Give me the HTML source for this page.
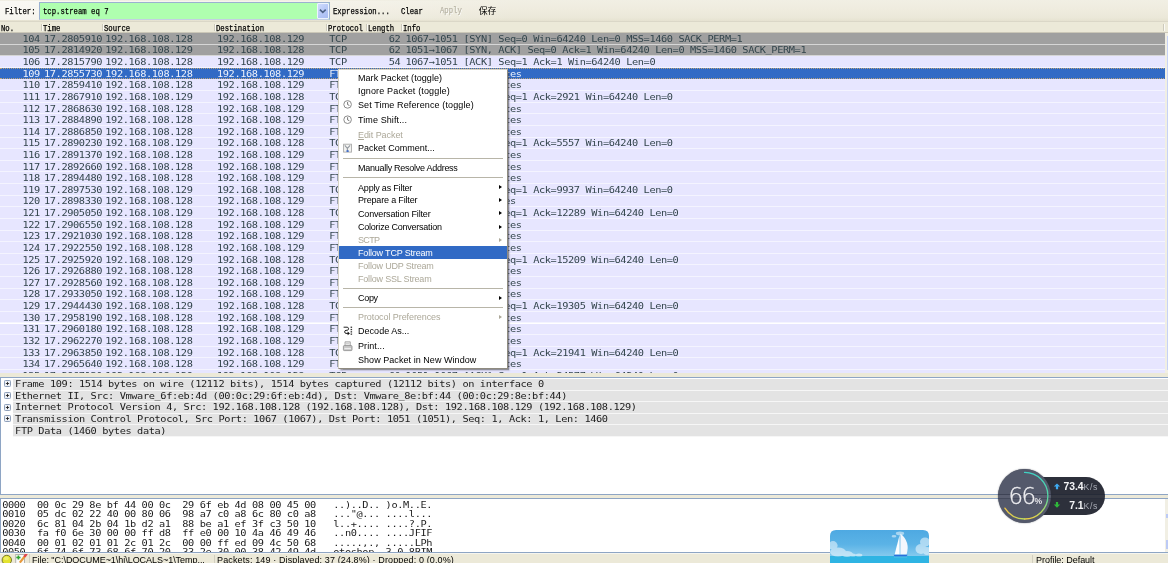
<!DOCTYPE html>
<html lang="zh"><head><meta charset="utf-8"><title>Wireshark</title>
<style>
html,body{margin:0;padding:0}
body{width:1169px;height:563px;overflow:hidden;background:#fff;position:relative;font-family:"Liberation Sans",sans-serif}
.abs{position:absolute}
#tb,#hd,#plist,#det,#hex,#sb,#menu{will-change:transform}
/* toolbar */
#tb{position:absolute;left:0;top:0;width:1168px;height:22px;background:linear-gradient(#f1efe4 0,#efecdf 40%,#ebe8d9 80%,#e7e3d2 93%,#d7d3c3 97%,#e6e3d4 100%)}
#tb:before{content:"";position:absolute;left:0;top:1px;width:520px;height:19px;background:linear-gradient(90deg,rgba(255,255,255,.6),rgba(255,255,255,.35) 50%,rgba(255,255,255,0))}
.ss{position:absolute;top:6.5px;font:8.7px "Liberation Mono","Noto Sans CJK SC",monospace;line-height:11px;color:#000;-webkit-text-stroke:.25px currentColor;transform:scaleX(.839);transform-origin:0 0;white-space:pre}
#finp{position:absolute;left:38.5px;top:2px;width:291.5px;height:18px;background:#afffaf;border:1px solid #9bb1d0;border-bottom-color:#c3d0e2;box-sizing:border-box}
#fdd{position:absolute;left:317px;top:3px;width:12px;height:16.4px;box-sizing:border-box;border:1px solid #eef3ff;border-radius:1px;background:linear-gradient(135deg,#cfdbfd,#b4c6f6 60%,#a9bdf2)}
/* header */
#hd{position:absolute;left:0;top:22px;width:1168px;height:11px;background:#ece9d8;border-bottom:1px solid #cbc7b8;box-sizing:border-box}
#hd .ss{top:1.5px}
#hd i{position:absolute;top:2px;width:1px;height:7px;background:#cdcabb;box-shadow:1px 0 0 #fbfaf5}
/* packet list */
#plist{position:absolute;left:0;top:33px;width:1165px;height:340px;overflow:hidden;background:#fff}
#vline{position:absolute;left:1165px;top:33px;width:3px;height:340px;background:#f1efe4}
#vline:after{content:"";position:absolute;left:2px;top:3px;width:1px;height:334px;background:#c6d2f7}
.r{position:absolute;left:0;width:1166px;height:11.62px;font:10.3px "DejaVu Sans Mono","Liberation Mono",monospace;letter-spacing:-.39px;line-height:11.6px;color:#33454c;white-space:pre;box-sizing:border-box;border-bottom:1px solid #f4f4ff;background:#e7e6ff;margin-top:-33px}
.r.g{background:#a0a0a0;border-bottom-color:#d6d6d6}
.r.s{background:#316ac5;color:#eef2fb;border-top:1px dotted #b9a27a;border-bottom:1px dotted #b9a27a}
.r.s span{top:-1.2px}
.r span{position:absolute;top:-.2px;transform:scaleY(.86);transform-origin:0 78%}
.no{right:1126.2px}.tm{left:44px}.sr{left:105.3px}.ds{left:217px}.pr{left:329.3px}.ln{right:765.7px}.in{left:405.4px}
/* splitters & panes */
#sp1{position:absolute;left:0;top:373px;width:1168px;height:4px;background:#ece9d8}
#det{position:absolute;left:0;top:377px;width:1168px;height:118px;box-sizing:border-box;border:1px solid #8ea5c4;border-right:0;background:#fff;overflow:hidden}
.d{position:absolute;left:12px;width:1156px;height:11.6px;box-sizing:border-box;border-bottom:1px solid #f6f6f6;background:#e3e3e3;font:10.3px "DejaVu Sans Mono","Liberation Mono",monospace;letter-spacing:-.39px;line-height:11.6px;color:#1c1c1c;white-space:pre}
.d span{position:absolute;left:2.1px;top:-.9px;transform:scaleY(.86);transform-origin:0 78%}
.ex{position:absolute;left:3.2px}
#sp2{position:absolute;left:0;top:495px;width:1168px;height:4px;background:#ece9d8}
#hex{position:absolute;left:0;top:498px;width:1168px;height:55px;border-right:0;box-sizing:border-box;border:1px solid #8ea5c4;background:#fff;overflow:hidden}
.h{position:absolute;left:1.2px;font:10.3px "DejaVu Sans Mono","Liberation Mono",monospace;letter-spacing:-.39px;line-height:11.6px;color:#1c1c1c;white-space:pre;transform:scaleY(.86);transform-origin:0 78%}
#sb{position:absolute;left:0;top:553px;width:1168px;height:10px;background:#ece9d8;font:9px "Liberation Sans",sans-serif;line-height:11px;color:#000;white-space:pre;overflow:hidden;border-top:1px solid #f6f5ee;box-sizing:border-box}
#sb span{position:absolute;top:1.3px}
/* menu */
#menu{position:absolute;left:338px;top:69px;width:170px;height:300px;background:#fff;border:1px solid #d6d3c6;border-right-color:#8f8b80;border-bottom-color:#8f8b80;box-sizing:border-box;box-shadow:1.7px 1.7px 1.5px rgba(60,60,70,.55);font:9px "Liberation Sans",sans-serif;color:#000;white-space:pre}
.mi.w{color:#fff}
.mi{position:absolute;left:19px;line-height:12px}
.mi.x{color:#aca899}
.ms{position:absolute;left:4px;width:160px;height:1px;background:#b8b5a8}
.ar{position:absolute;left:160px;width:0;height:0;border:2.5px solid transparent;border-left:3px solid #000;border-right:0}
.ar.x{border-left-color:#aca899}
#hl{position:absolute;left:0;top:176px;width:168px;height:13px;background:#316ac5}
/* widget */
#wg{position:absolute;left:997px;top:468px;width:110px;height:56px;white-space:pre;will-change:transform}
#pill{position:absolute;left:40px;top:9px;width:68.2px;height:38px;border-radius:0 19px 19px 0;background:#2d303b}
#circ{position:absolute;left:.6px;top:.6px;width:53px;height:54.2px;border-radius:50%;background:#54596b;box-shadow:0 0 1.2px rgba(40,44,56,.9)}
#w66{position:absolute;left:11.4px;top:14.6px;font:200 23px "DejaVu Sans","Liberation Sans",sans-serif;line-height:27px;color:#ececef;transform:scaleX(1);transform-origin:0 0;-webkit-text-stroke:.3px #ececef;letter-spacing:-1.4px}
#wpc{position:absolute;left:37.6px;top:27.6px;font:bold 8.6px "Liberation Sans",sans-serif;line-height:10px;color:#e4e4e8}
.wn{position:absolute;font:bold 10.4px "Liberation Sans",sans-serif;line-height:11px;color:#f4f4f6;letter-spacing:-.1px}
.wk{position:absolute;left:86.6px;font:8.8px "Liberation Sans",sans-serif;line-height:10px;color:#a9acb6;letter-spacing:.55px}
#hsb{position:absolute;left:1164.5px;top:499px;width:3.5px;height:53px;background:#f1efe4}
#hsb:before{content:"";position:absolute;left:1.5px;top:15px;width:2px;height:4px;background:#bccaf5}
#hsb:after{content:"";position:absolute;left:1.5px;top:41px;width:2px;height:9px;background:#bccaf5}
.cjk{position:absolute;top:6.4px;font:8.8px "Liberation Sans","Noto Sans CJK SC",sans-serif;line-height:11px;color:#000;white-space:pre}
#wln{position:absolute;left:1px;top:26px;width:107px;height:4.6px;box-sizing:border-box;background:rgba(255,255,255,.035);border-top:1px solid rgba(18,24,44,.38);border-bottom:1px solid rgba(18,24,44,.3)}

</style></head>
<body>
<div id="tb">
<span class="ss" style="left:5px">Filter:</span>
<div id="finp"></div><span class="ss" style="left:43px">tcp.stream eq 7</span>
<div id="fdd"><svg width="10" height="14" viewBox="0 0 10 14" style="position:absolute;left:0;top:0"><path d="M1.9 5.600L4.800 8.4L7.700 5.600" fill="none" stroke="#4d6185" stroke-width="1.5"/></svg></div>
<span class="ss" style="left:333px">Expression...</span>
<span class="ss" style="left:401px">Clear</span>
<span class="ss" style="left:439.5px;top:6px;color:#b9b5a6;text-shadow:.6px .6px 0 #fff">Apply</span>
<span class="cjk" style="left:478.8px">保存</span>
</div>
<div id="hd">
<span class="ss" style="left:1px">No.</span><i style="left:41px"></i>
<span class="ss" style="left:43px">Time</span><i style="left:102px"></i>
<span class="ss" style="left:104px">Source</span><i style="left:214px"></i>
<span class="ss" style="left:216px">Destination</span><i style="left:326px"></i>
<span class="ss" style="left:328px">Protocol</span><i style="left:366px"></i>
<span class="ss" style="left:368px">Length</span><i style="left:401px"></i>
<span class="ss" style="left:403px">Info</span><i style="left:1163px"></i>
</div>
<div id="vline"></div>
<div id="plist">
<div class="r g" style="top:33.00px"><span class="no">104</span><span class="tm">17.2805910</span><span class="sr">192.168.108.128</span><span class="ds">192.168.108.129</span><span class="pr">TCP</span><span class="ln">62</span><span class="in">1067→1051 [SYN] Seq=0 Win=64240 Len=0 MSS=1460 SACK_PERM=1</span></div>
<div class="r g" style="top:44.62px"><span class="no">105</span><span class="tm">17.2814920</span><span class="sr">192.168.108.129</span><span class="ds">192.168.108.128</span><span class="pr">TCP</span><span class="ln">62</span><span class="in">1051→1067 [SYN, ACK] Seq=0 Ack=1 Win=64240 Len=0 MSS=1460 SACK_PERM=1</span></div>
<div class="r l" style="top:56.24px"><span class="no">106</span><span class="tm">17.2815790</span><span class="sr">192.168.108.128</span><span class="ds">192.168.108.129</span><span class="pr">TCP</span><span class="ln">54</span><span class="in">1067→1051 [ACK] Seq=1 Ack=1 Win=64240 Len=0</span></div>
<div class="r s" style="top:67.86px"><span class="no">109</span><span class="tm">17.2855730</span><span class="sr">192.168.108.128</span><span class="ds">192.168.108.129</span><span class="pr">FTP-DATA</span><span class="ln">1514</span><span class="in">FTP Data: 1460 bytes</span></div>
<div class="r l" style="top:79.48px"><span class="no">110</span><span class="tm">17.2859410</span><span class="sr">192.168.108.128</span><span class="ds">192.168.108.129</span><span class="pr">FTP-DATA</span><span class="ln">1514</span><span class="in">FTP Data: 1460 bytes</span></div>
<div class="r l" style="top:91.10px"><span class="no">111</span><span class="tm">17.2867910</span><span class="sr">192.168.108.129</span><span class="ds">192.168.108.128</span><span class="pr">TCP</span><span class="ln">54</span><span class="in">1051→1067 [ACK] Seq=1 Ack=2921 Win=64240 Len=0</span></div>
<div class="r l" style="top:102.72px"><span class="no">112</span><span class="tm">17.2868630</span><span class="sr">192.168.108.128</span><span class="ds">192.168.108.129</span><span class="pr">FTP-DATA</span><span class="ln">1514</span><span class="in">FTP Data: 1460 bytes</span></div>
<div class="r l" style="top:114.34px"><span class="no">113</span><span class="tm">17.2884890</span><span class="sr">192.168.108.128</span><span class="ds">192.168.108.129</span><span class="pr">FTP-DATA</span><span class="ln">1514</span><span class="in">FTP Data: 1460 bytes</span></div>
<div class="r l" style="top:125.96px"><span class="no">114</span><span class="tm">17.2886850</span><span class="sr">192.168.108.128</span><span class="ds">192.168.108.129</span><span class="pr">FTP-DATA</span><span class="ln">1514</span><span class="in">FTP Data: 1460 bytes</span></div>
<div class="r l" style="top:137.58px"><span class="no">115</span><span class="tm">17.2890230</span><span class="sr">192.168.108.129</span><span class="ds">192.168.108.128</span><span class="pr">TCP</span><span class="ln">54</span><span class="in">1051→1067 [ACK] Seq=1 Ack=5557 Win=64240 Len=0</span></div>
<div class="r l" style="top:149.20px"><span class="no">116</span><span class="tm">17.2891370</span><span class="sr">192.168.108.128</span><span class="ds">192.168.108.129</span><span class="pr">FTP-DATA</span><span class="ln">1514</span><span class="in">FTP Data: 1460 bytes</span></div>
<div class="r l" style="top:160.82px"><span class="no">117</span><span class="tm">17.2892660</span><span class="sr">192.168.108.128</span><span class="ds">192.168.108.129</span><span class="pr">FTP-DATA</span><span class="ln">1514</span><span class="in">FTP Data: 1460 bytes</span></div>
<div class="r l" style="top:172.44px"><span class="no">118</span><span class="tm">17.2894480</span><span class="sr">192.168.108.128</span><span class="ds">192.168.108.129</span><span class="pr">FTP-DATA</span><span class="ln">1514</span><span class="in">FTP Data: 1460 bytes</span></div>
<div class="r l" style="top:184.06px"><span class="no">119</span><span class="tm">17.2897530</span><span class="sr">192.168.108.129</span><span class="ds">192.168.108.128</span><span class="pr">TCP</span><span class="ln">54</span><span class="in">1051→1067 [ACK] Seq=1 Ack=9937 Win=64240 Len=0</span></div>
<div class="r l" style="top:195.68px"><span class="no">120</span><span class="tm">17.2898330</span><span class="sr">192.168.108.128</span><span class="ds">192.168.108.129</span><span class="pr">FTP-DATA</span><span class="ln">946</span><span class="in">FTP Data: 892 bytes</span></div>
<div class="r l" style="top:207.30px"><span class="no">121</span><span class="tm">17.2905050</span><span class="sr">192.168.108.129</span><span class="ds">192.168.108.128</span><span class="pr">TCP</span><span class="ln">54</span><span class="in">1051→1067 [ACK] Seq=1 Ack=12289 Win=64240 Len=0</span></div>
<div class="r l" style="top:218.92px"><span class="no">122</span><span class="tm">17.2906550</span><span class="sr">192.168.108.128</span><span class="ds">192.168.108.129</span><span class="pr">FTP-DATA</span><span class="ln">1514</span><span class="in">FTP Data: 1460 bytes</span></div>
<div class="r l" style="top:230.54px"><span class="no">123</span><span class="tm">17.2921030</span><span class="sr">192.168.108.128</span><span class="ds">192.168.108.129</span><span class="pr">FTP-DATA</span><span class="ln">1514</span><span class="in">FTP Data: 1460 bytes</span></div>
<div class="r l" style="top:242.16px"><span class="no">124</span><span class="tm">17.2922550</span><span class="sr">192.168.108.128</span><span class="ds">192.168.108.129</span><span class="pr">FTP-DATA</span><span class="ln">1514</span><span class="in">FTP Data: 1460 bytes</span></div>
<div class="r l" style="top:253.78px"><span class="no">125</span><span class="tm">17.2925920</span><span class="sr">192.168.108.129</span><span class="ds">192.168.108.128</span><span class="pr">TCP</span><span class="ln">54</span><span class="in">1051→1067 [ACK] Seq=1 Ack=15209 Win=64240 Len=0</span></div>
<div class="r l" style="top:265.40px"><span class="no">126</span><span class="tm">17.2926880</span><span class="sr">192.168.108.128</span><span class="ds">192.168.108.129</span><span class="pr">FTP-DATA</span><span class="ln">1514</span><span class="in">FTP Data: 1460 bytes</span></div>
<div class="r l" style="top:277.02px"><span class="no">127</span><span class="tm">17.2928560</span><span class="sr">192.168.108.128</span><span class="ds">192.168.108.129</span><span class="pr">FTP-DATA</span><span class="ln">1514</span><span class="in">FTP Data: 1460 bytes</span></div>
<div class="r l" style="top:288.64px"><span class="no">128</span><span class="tm">17.2933050</span><span class="sr">192.168.108.128</span><span class="ds">192.168.108.129</span><span class="pr">FTP-DATA</span><span class="ln">1514</span><span class="in">FTP Data: 1460 bytes</span></div>
<div class="r l" style="top:300.26px"><span class="no">129</span><span class="tm">17.2944430</span><span class="sr">192.168.108.129</span><span class="ds">192.168.108.128</span><span class="pr">TCP</span><span class="ln">54</span><span class="in">1051→1067 [ACK] Seq=1 Ack=19305 Win=64240 Len=0</span></div>
<div class="r l" style="top:311.88px"><span class="no">130</span><span class="tm">17.2958190</span><span class="sr">192.168.108.128</span><span class="ds">192.168.108.129</span><span class="pr">FTP-DATA</span><span class="ln">1514</span><span class="in">FTP Data: 1460 bytes</span></div>
<div class="r l" style="top:323.50px"><span class="no">131</span><span class="tm">17.2960180</span><span class="sr">192.168.108.128</span><span class="ds">192.168.108.129</span><span class="pr">FTP-DATA</span><span class="ln">1514</span><span class="in">FTP Data: 1460 bytes</span></div>
<div class="r l" style="top:335.12px"><span class="no">132</span><span class="tm">17.2962270</span><span class="sr">192.168.108.128</span><span class="ds">192.168.108.129</span><span class="pr">FTP-DATA</span><span class="ln">1514</span><span class="in">FTP Data: 1460 bytes</span></div>
<div class="r l" style="top:346.74px"><span class="no">133</span><span class="tm">17.2963850</span><span class="sr">192.168.108.129</span><span class="ds">192.168.108.128</span><span class="pr">TCP</span><span class="ln">54</span><span class="in">1051→1067 [ACK] Seq=1 Ack=21941 Win=64240 Len=0</span></div>
<div class="r l" style="top:358.36px"><span class="no">134</span><span class="tm">17.2965640</span><span class="sr">192.168.108.128</span><span class="ds">192.168.108.129</span><span class="pr">FTP-DATA</span><span class="ln">1514</span><span class="in">FTP Data: 1460 bytes</span></div>
<div class="r l" style="top:369.98px"><span class="no">135</span><span class="tm">17.2967130</span><span class="sr">192.168.108.129</span><span class="ds">192.168.108.128</span><span class="pr">TCP</span><span class="ln">60</span><span class="in">1051→1067 [ACK] Seq=1 Ack=24577 Win=64240 Len=0</span></div>
</div>
<div id="sp1"></div>
<div id="det">
<svg class="ex" style="top:2.4px" width="7" height="7" viewBox="0 0 7 7"><rect x=".5" y=".5" width="6" height="6" rx=".8" fill="#eef1f6" stroke="#8fa0ba"/><path d="M1.9 3.5H5.1M3.5 1.9V5.1" stroke="#1a1a1a" stroke-width=".85"/></svg><div class="d" style="top:1px"><span>Frame 109: 1514 bytes on wire (12112 bits), 1514 bytes captured (12112 bits) on interface 0</span></div>
<svg class="ex" style="top:14.0px" width="7" height="7" viewBox="0 0 7 7"><rect x=".5" y=".5" width="6" height="6" rx=".8" fill="#eef1f6" stroke="#8fa0ba"/><path d="M1.9 3.5H5.1M3.5 1.9V5.1" stroke="#1a1a1a" stroke-width=".85"/></svg><div class="d" style="top:12.6px"><span>Ethernet II, Src: Vmware_6f:eb:4d (00:0c:29:6f:eb:4d), Dst: Vmware_8e:bf:44 (00:0c:29:8e:bf:44)</span></div>
<svg class="ex" style="top:25.6px" width="7" height="7" viewBox="0 0 7 7"><rect x=".5" y=".5" width="6" height="6" rx=".8" fill="#eef1f6" stroke="#8fa0ba"/><path d="M1.9 3.5H5.1M3.5 1.9V5.1" stroke="#1a1a1a" stroke-width=".85"/></svg><div class="d" style="top:24.2px"><span>Internet Protocol Version 4, Src: 192.168.108.128 (192.168.108.128), Dst: 192.168.108.129 (192.168.108.129)</span></div>
<svg class="ex" style="top:37.2px" width="7" height="7" viewBox="0 0 7 7"><rect x=".5" y=".5" width="6" height="6" rx=".8" fill="#eef1f6" stroke="#8fa0ba"/><path d="M1.9 3.5H5.1M3.5 1.9V5.1" stroke="#1a1a1a" stroke-width=".85"/></svg><div class="d" style="top:35.8px"><span>Transmission Control Protocol, Src Port: 1067 (1067), Dst Port: 1051 (1051), Seq: 1, Ack: 1, Len: 1460</span></div>
<div class="d" style="top:47.4px"><span>FTP Data (1460 bytes data)</span></div>
</div>
<div id="sp2"></div>
<div id="hex">
<div class="h" style="top:-0.30px">0000  00 0c 29 8e bf 44 00 0c  29 6f eb 4d 08 00 45 00   ..)..D.. )o.M..E.</div>
<div class="h" style="top:9.18px">0010  05 dc 02 22 40 00 80 06  98 a7 c0 a8 6c 80 c0 a8   ..."@... ....l...</div>
<div class="h" style="top:18.66px">0020  6c 81 04 2b 04 1b d2 a1  88 be a1 ef 3f c3 50 10   l..+.... ....?.P.</div>
<div class="h" style="top:28.14px">0030  fa f0 6e 30 00 00 ff d8  ff e0 00 10 4a 46 49 46   ..n0.... ....JFIF</div>
<div class="h" style="top:37.62px">0040  00 01 02 01 01 2c 01 2c  00 00 ff ed 09 4c 50 68   .....,., .....LPh</div>
<div class="h" style="top:47.10px">0050  6f 74 6f 73 68 6f 70 20  33 2e 30 00 38 42 49 4d   otoshop  3.0.8BIM</div>
</div>
<div id="hsb"></div>
<div id="sb">
<svg class="abs" style="left:0;top:-1.8px" width="30" height="11" viewBox="0 0 30 11">
<circle cx="6.8" cy="8" r="4.7" fill="#e3e32f" stroke="#6f6f22" stroke-width=".9"/>
<ellipse cx="6.2" cy="6.4" rx="2.6" ry="1.8" fill="#f2f27a" opacity=".7"/>
<rect x="15.8" y="2.6" width="8.6" height="9" fill="#fbfbfb" stroke="#9a9a9a" stroke-width=".7"/>
<path d="M18.4 3.4V7.6M16.3 5.5H20.5" stroke="#2fa32f" stroke-width="1.7"/>
<path d="M25.6 3.2L19.8 10.6" stroke="#e89a3c" stroke-width="2.2"/>
<path d="M26.3 2.3L24.9 4.1" stroke="#e2474f" stroke-width="2.4" stroke-linecap="round"/>
<path d="M29.5 1V11" stroke="#d2cfc0" stroke-width="1"/>
</svg>
<span style="left:32.1px;letter-spacing:-0.04px">File: "C:\DOCUME~1\hj\LOCALS~1\Temp...</span>
<span style="left:217.1px;letter-spacing:0.12px">Packets: 149 · Displayed: 37 (24.8%) · Dropped: 0 (0.0%)</span>
<span style="left:1036.1px;letter-spacing:-0.04px">Profile: Default</span>

<i class="abs" style="left:213.5px;top:1px;width:1px;height:10px;background:#d2cfc0"></i>
<i class="abs" style="left:1032px;top:1px;width:1px;height:10px;background:#d2cfc0"></i>
</div>
<svg id="boat" class="abs" style="left:830px;top:530px" width="99" height="33" viewBox="0 0 99 33">
<defs><linearGradient id="sky" x1="0" y1="0" x2="0" y2="1"><stop offset="0" stop-color="#4ea9e2"/><stop offset=".55" stop-color="#5bb3e6"/><stop offset="1" stop-color="#86caee"/></linearGradient>
<filter id="bl" x="-10%" y="-10%" width="120%" height="120%"><feGaussianBlur stdDeviation=".5"/></filter><clipPath id="bc"><path d="M0 33V6Q0 0 6 0H93Q99 0 99 6V33Z"/></clipPath></defs>
<g clip-path="url(#bc)">
<rect width="99" height="26.2" fill="url(#sky)"/>
<rect y="26" width="99" height="7" fill="#2fb4e3"/>
<g fill="#fff" opacity=".5" filter="url(#bl)"><ellipse cx="3" cy="15.5" rx="4.6" ry="4.4"/><ellipse cx="8" cy="22" rx="8" ry="4.5"/><ellipse cx="17" cy="24" rx="6" ry="3"/><ellipse cx="29" cy="25" rx="3.4" ry="1.6"/><ellipse cx="23" cy="25" rx="3" ry="1.6"/>
<ellipse cx="95" cy="12" rx="5" ry="4.6"/><ellipse cx="91" cy="19" rx="5.5" ry="5"/><ellipse cx="97" cy="21" rx="4" ry="4"/>
<ellipse cx="70" cy="3.4" rx="4.2" ry="1.8"/><ellipse cx="64" cy="6.2" rx="2.4" ry="1.3"/></g>
<path d="M70.4 3.6Q80.5 12 76.6 24.4H70.4Z" fill="#f3f7fd"/>
<path d="M69.6 5L64.6 24.4H69.6Z" fill="#fbfdff"/>
<path d="M63.6 24.8H77.6L76.4 26.6H64.6Z" fill="#2a6fdc"/>
<path d="M64 27H77" stroke="#6cc6ec" stroke-width=".8" opacity=".8"/>
</g></svg>
<div id="wg">
<div id="pill"></div><div id="circ"></div><div id="wln"></div>
<svg class="abs" style="left:0;top:0" width="110" height="56" viewBox="0 0 110 56">
<defs><linearGradient id="ag" x1="0" y1="0" x2="0" y2="1"><stop offset="0" stop-color="#3fd2c4"/><stop offset=".55" stop-color="#57d6a0"/><stop offset=".85" stop-color="#b9dc60"/><stop offset="1" stop-color="#f0cf44"/></linearGradient>
<linearGradient id="ag2" x1="1" y1="0" x2="0" y2="0"><stop offset="0" stop-color="#b9dc60"/><stop offset="1" stop-color="#f2c744"/></linearGradient></defs>
<path d="M27.6 4.4A23.3 23.3 0 0 1 27.6 51" fill="none" stroke="url(#ag)" stroke-width="1.3" stroke-linecap="round"/>
<path d="M27.6 51A23.3 23.3 0 0 1 7.900 40.1" fill="none" stroke="url(#ag2)" stroke-width="1.3" stroke-linecap="round"/>
<path d="M60 15.4L63.2 18.6H61.1V21.2H58.9V18.600H56.8Z" fill="#3eaaf0"/>
<path d="M60 39.8L63.2 36.600H61.1V34H58.9V36.600H56.800Z" fill="#2fb93a"/>
</svg>
<span id="w66">66</span><span id="wpc">%</span>
<span class="wn" style="top:12.9px;right:23.6px">73.4</span><span class="wk" style="top:13.8px">K/s</span>
<span class="wn" style="top:32.3px;right:23.6px">7.1</span><span class="wk" style="top:33.2px">K/s</span>
</div>
<div id="menu">
<div id="hl"></div>
<svg class="abs" style="left:0;top:0" width="18" height="298" viewBox="0 0 18 298">
<g fill="#fff" stroke="#8c8c8c" stroke-width="1"><circle cx="8.6" cy="34.4" r="3.8"/><circle cx="8.6" cy="49.7" r="3.8"/></g>
<g fill="none" stroke="#555" stroke-width=".8"><path d="M8.6 31.9V34.6L10.4 35.5"/><path d="M8.6 47.2V49.9L10.4 50.8"/></g>
<rect x="4.6" y="74.2" width="7.9" height="7.9" fill="#f3f3f1" stroke="#a9a9a9" stroke-width=".9"/>
<path d="M5.8 75.4L8.4 78.4V81M11.100 75.4L8.4 78.4" fill="none" stroke="#949aa1" stroke-width="1.1"/>
<rect x="7.5" y="80.3" width="2.2" height="1.6" fill="#2f62c8"/>
<path d="M4.6 257.2H8.2C10 257.2 10 260.3 8.2 260.3H7C5.2 260.3 5.2 263.4 7 263.4H9.5" fill="none" stroke="#222" stroke-width="1"/>
<path d="M8.6 261.6L10.9 263.4L8.6 265.2Z" fill="#111"/>
<g fill="#333"><rect x="11.6" y="256.6" width="1.5" height="1.3"/><rect x="11.6" y="258.9" width="1.5" height="1.3"/><rect x="11.6" y="261.2" width="1.5" height="1.3"/><rect x="11.6" y="263.5" width="1.5" height="1.3"/></g>
<path d="M6 276V271.8H11.3V276" fill="#e9e9e9" stroke="#9a9a9a" stroke-width=".8"/>
<rect x="4.4" y="275.6" width="8.6" height="5" rx=".8" fill="#c9c9c9" stroke="#8a8a8a" stroke-width=".8"/>
<path d="M5.4 278.6H12" stroke="#f4f4f4" stroke-width=".9"/><path d="M7 273.6H10.2" stroke="#bbb" stroke-width=".6"/>
</svg>
<span class="mi" style="top:2.0px;letter-spacing:0.05px">Mark Packet (toggle)</span>
<span class="mi" style="top:14.5px;letter-spacing:0.15px">Ignore Packet (toggle)</span>
<span class="mi" style="top:28.7px;letter-spacing:0.12px">Set Time Reference (toggle)</span>
<span class="mi" style="top:44.0px;letter-spacing:0.10px">Time Shift...</span>
<span class="mi x" style="top:58.5px;letter-spacing:-0.07px"><u>E</u>dit Packet</span>
<span class="mi" style="top:72.4px;letter-spacing:0.02px">Packet Comment...</span>
<span class="mi" style="top:92.3px;letter-spacing:-0.27px">Manually Resolve Address</span>
<span class="mi" style="top:111.6px;letter-spacing:-0.19px">Apply as Filter</span><i class="ar" style="top:115.3px"></i>
<span class="mi" style="top:124.4px;letter-spacing:-0.17px">Prepare a Filter</span><i class="ar" style="top:128.1px"></i>
<span class="mi" style="top:137.6px;letter-spacing:-0.16px">Conversation Filter</span><i class="ar" style="top:141.3px"></i>
<span class="mi" style="top:151.0px;letter-spacing:-0.23px">Colorize Conversation</span><i class="ar" style="top:154.7px"></i>
<span class="mi x" style="top:164.0px;letter-spacing:-0.68px">SCTP</span><i class="ar x" style="top:167.7px"></i>
<span class="mi w" style="top:177.0px;letter-spacing:-0.18px">Follow TCP Stream</span>
<span class="mi x" style="top:190.2px;letter-spacing:-0.19px">Follow UDP Stream</span>
<span class="mi x" style="top:203.2px;letter-spacing:-0.19px">Follow SSL Stream</span>
<span class="mi" style="top:221.9px;letter-spacing:-0.30px">Copy</span><i class="ar" style="top:225.6px"></i>
<span class="mi x" style="top:241.0px;letter-spacing:-0.08px">Protocol Preferences</span><i class="ar x" style="top:244.7px"></i>
<span class="mi" style="top:254.8px;letter-spacing:0.03px">Decode As...</span>
<span class="mi" style="top:270.2px;letter-spacing:0.09px">Print...</span>
<span class="mi" style="top:283.8px;letter-spacing:0.05px">Show Packet in New Window</span>
<div class="ms" style="top:88px"></div>
<div class="ms" style="top:107px"></div>
<div class="ms" style="top:218px"></div>
<div class="ms" style="top:237px"></div>
</div>
</body></html>
